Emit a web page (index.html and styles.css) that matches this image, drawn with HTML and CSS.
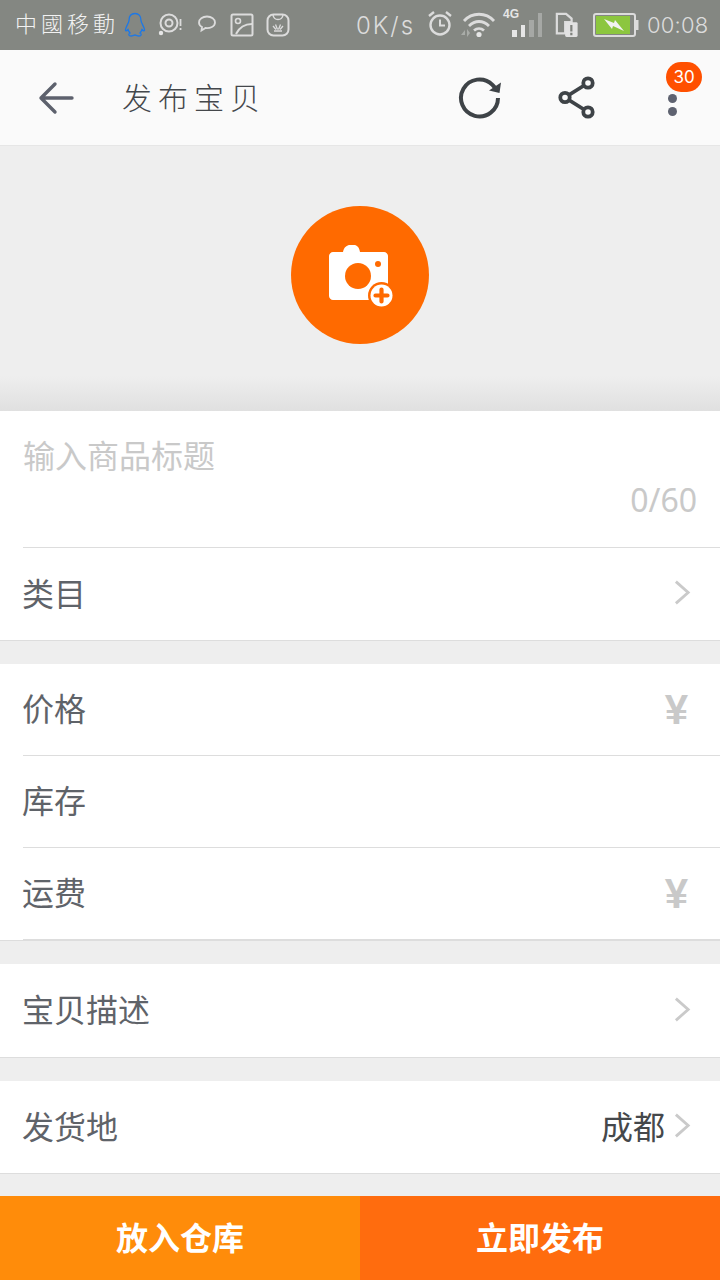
FILE: index.html
```html
<!DOCTYPE html>
<html lang="zh">
<head>
<meta charset="utf-8">
<title>发布宝贝</title>
<link rel="stylesheet" href="styles.css">
</head>
<body>
<div class="page">
  <div class="status">
    <span class="carrier">中國移動</span>
    <svg class="si qq" width="24" height="26" viewBox="0 0 24 26"><path d="M12 1.500c-4 0-6 3-6 7 0 2-3 6-3.500 9-.2 1.500.8 2 2.500 0 .5 1.500 1 2.500 2 3.500-2 1-1.500 3 1 3 2 0 3-1 4-1s2 1 4 1c2.500 0 3-2 1-3 1-1 1.500-2 2-3.500 1.700 2 2.700 1.500 2.500 0-.5-3-3.500-7-3.500-9 0-4-2-7-6-7z" fill="none" stroke="#1d78e6" stroke-width="1.300"/></svg>
    <svg class="si s1" width="26" height="26" viewBox="0 0 26 26"><circle cx="11" cy="11" r="8.500" fill="none" stroke="#dcdcdc" stroke-width="2"/><circle cx="11" cy="11" r="3.500" fill="none" stroke="#dcdcdc" stroke-width="2"/><circle cx="3" cy="21" r="2.200" fill="#e6e6e6"/><path d="M22.500 7v7M22.500 16v2" stroke="#dcdcdc" stroke-width="1.800"/></svg>
    <svg class="si s2" width="22" height="22" viewBox="0 0 22 22"><path d="M11 3.500c-4.500 0-8 2.500-8 6 0 2 1 3.500 3 4.500l-.5 3.500 4-2.500c4.500.5 9.500-1.500 9.500-5.500 0-3.500-3.500-6-8-6z" fill="none" stroke="#dcdcdc" stroke-width="1.800"/></svg>
    <svg class="si s3" width="24" height="24" viewBox="0 0 24 24"><rect x="1.500" y="1.500" width="21" height="21" rx="1.500" fill="none" stroke="#dcdcdc" stroke-width="2"/><circle cx="8" cy="8" r="2.500" fill="none" stroke="#dcdcdc" stroke-width="1.600"/><path d="M6 21c3-6 8-10 16-10" fill="none" stroke="#dcdcdc" stroke-width="2"/></svg>
    <svg class="si s4" width="24" height="24" viewBox="0 0 24 24"><rect x="1.500" y="1.500" width="21" height="21" rx="6" fill="none" stroke="#dcdcdc" stroke-width="2"/><path d="M7 2c.5 3 2.500 4.500 5 4.500S16.500 5 17 2" fill="none" stroke="#dcdcdc" stroke-width="1.500"/><path d="M7 13l3 3.500M9.500 11.500l2 5M14.500 11.500l-2 5M17 13l-3 3.500M8 18h8" stroke="#dcdcdc" stroke-width="1.300"/></svg>
    <span class="speed">0K/s</span>
    <svg class="si s5" width="26" height="28" viewBox="0 0 26 28"><circle cx="13" cy="15" r="9.500" fill="none" stroke="#dcdcdc" stroke-width="2.400"/><path d="M13 9.500V15.500H18" fill="none" stroke="#dcdcdc" stroke-width="2"/><path d="M2 6l5-4M24 6l-5-4" stroke="#dcdcdc" stroke-width="2.400"/></svg>
    <svg class="si s6" width="36" height="28" viewBox="0 0 36 28"><path d="M3 11C11 2 25 2 33 11M8 16c6-6 14-6 20 0M13 20.500c3-2.500 7-2.500 10 0" fill="none" stroke="#dcdcdc" stroke-width="2.800"/><circle cx="18" cy="24.500" r="2.600" fill="#e6e6e6"/><path d="M0 25l4-5v5zM6 19v8l3-4z" fill="#a9aca8"/></svg>
    <span class="net">
      <span class="g4">4G</span>
      <span class="bars"><i class="b1"></i><i class="b2"></i><i class="b3 dim"></i><i class="b4 dim"></i></span>
    </span>
    <svg class="si s7" width="24" height="26" viewBox="0 0 26 28"><path d="M2 2h10l6 5v4h-7v12H2z" fill="none" stroke="#dcdcdc" stroke-width="2.400"/><rect x="11" y="11" width="13.500" height="16" rx="1.500" fill="#e2e2e2"/><path d="M17.700 14v7M17.700 22.500v2.500" stroke="#7f827d" stroke-width="2.400"/></svg>
    <svg class="si s8" width="46" height="24" viewBox="0 0 46 24"><rect x="1" y="1" width="41" height="22" rx="2" fill="none" stroke="#dcdcdc" stroke-width="2"/><rect x="3" y="3" width="34" height="18" fill="#8cc63f"/><rect x="42.500" y="7" width="3" height="10" fill="#dcdcdc"/><path d="M11 6l10 4 1-3 9 11-11-5-1 3z" fill="#f2f2f2"/></svg>
    <span class="clock">00:08</span>
  </div>

  <header class="toolbar">
    <svg class="back" width="36" height="34" viewBox="0 0 36 34"><path d="M17 3L3 17l14 14M3 17h31" fill="none" stroke="#5d616d" stroke-width="3.400" stroke-linecap="round" stroke-linejoin="round"/></svg>
    <h1 class="title">发布宝贝</h1>
    <svg class="refresh" width="46" height="44" viewBox="0 0 46 44"><path d="M40 22a18.500 18.500 0 1 1-5.500-13.200l4 4.500" fill="none" stroke="#3e4347" stroke-width="4"/><path d="M43 6.500L41.500 17 31 14.500z" fill="#3e4347"/></svg>
    <svg class="share" width="42" height="46" viewBox="0 0 42 46"><path d="M32 8L9 22.500 32 37" fill="none" stroke="#3e4347" stroke-width="3.800"/><circle cx="32" cy="8" r="4.700" fill="#fafafa" stroke="#3e4347" stroke-width="3.800"/><circle cx="9" cy="22.500" r="4.700" fill="#fafafa" stroke="#3e4347" stroke-width="3.800"/><circle cx="32" cy="37" r="4.700" fill="#fafafa" stroke="#3e4347" stroke-width="3.800"/></svg>
    <div class="more"><i></i><i></i><span class="badge">30</span></div>
  </header>

  <section class="hero">
    <div class="cam">
      <svg width="66" height="64" viewBox="0 0 66 64"><path d="M4 7H14C15 2 18 0 21 0h4c3 0 5 2 6 7H55c2 0 4 2 4 4V51c0 2-2 4-4 4H4c-2 0-4-2-4-4V11c0-2 2-4 4-4z" fill="#fff"/><circle cx="29" cy="31" r="13" fill="#ff6a00"/><circle cx="49" cy="19" r="3" fill="#ff6a00"/><circle cx="52.500" cy="50.500" r="13.500" fill="#ff6a00"/><circle cx="52.500" cy="50.500" r="11" fill="#fff"/><path d="M52.500 44.500v12M46.500 50.500h12" stroke="#ff6a00" stroke-width="4.200" stroke-linecap="round"/></svg>
    </div>
  </section>

  <section class="group">
    <div class="title-input">
      <div class="placeholder">输入商品标题</div>
      <div class="count">0/60</div>
    </div>
    <div class="row last tall">
      <span class="label">类目</span>
      <svg class="chev" width="17" height="25" viewBox="0 0 18 26"><path d="M2 1.500L15 13 2 24.500" fill="none" stroke="#cacaca" stroke-width="3"/></svg>
    </div>
  </section>

  <section class="group">
    <div class="row"><span class="label">价格</span><span class="yen">¥</span></div>
    <div class="row"><span class="label">库存</span></div>
    <div class="row"><span class="label">运费</span><span class="yen">¥</span></div>
  </section>

  <section class="group">
    <div class="row last tall">
      <span class="label">宝贝描述</span>
      <svg class="chev" width="17" height="25" viewBox="0 0 18 26"><path d="M2 1.500L15 13 2 24.500" fill="none" stroke="#cacaca" stroke-width="3"/></svg>
    </div>
  </section>

  <section class="group final">
    <div class="row last">
      <span class="label">发货地</span>
      <span class="value">成都</span>
      <svg class="chev near" width="17" height="25" viewBox="0 0 18 26"><path d="M2 1.500L15 13 2 24.500" fill="none" stroke="#cacaca" stroke-width="3"/></svg>
    </div>
  </section>

  <footer class="actions">
    <button class="btn store">放入仓库</button>
    <button class="btn publish">立即发布</button>
  </footer>
</div>
</body>
</html>
```

FILE: styles.css
```css
* { box-sizing: border-box; }
html, body { margin: 0; padding: 0; }
body {
  width: 720px;
  height: 1280px;
  overflow: hidden;
  background: #eeeeee;
  font-family: "Noto Sans CJK SC", "Noto Sans", sans-serif;
}
.page { width: 720px; height: 1280px; display: flex; flex-direction: column; background: #eeeeee; }

.status {
  height: 50px;
  background: #848782;
  display: flex;
  align-items: center;
  color: #e6e6e6;
  flex: none;
}
.si { flex: none; display: block; }
.carrier { margin-left: 15px; margin-bottom: 6px; width: 108px; font-size: 22px; letter-spacing: 4px; color: #f2f2f2; white-space: nowrap; font-weight: 300; }
.qq { margin-left: 0; }
.s1 { margin-left: 11px; }
.s2 { margin-left: 12px; margin-top: -2px; }
.s3 { margin-left: 12px; }
.s4 { margin-left: 12px; }
.speed { margin-left: 66px; width: 67px; font-family: "Inter", sans-serif; font-size: 24px; font-weight: 300; letter-spacing: 2px; color: #dcdcdc; white-space: nowrap; }
.s5 { margin-left: 4px; margin-top: -2px; }
.s6 { margin-left: 8px; margin-top: -3px; }
.net { position: relative; width: 38px; height: 38px; margin-left: 6px; flex: none; }
.g4 { position: absolute; left: 0; top: 1px; font: 700 12px/14px "Liberation Sans", sans-serif; color: #e6e6e6; }
.bars { position: absolute; left: 9px; top: 7px; height: 24px; display: flex; align-items: flex-end; gap: 4px; }
.bars i { display: block; width: 4.500px; background: #e6e6e6; }
.bars .dim { background: #a6a8a5; }
.b1 { height: 7px; }
.b2 { height: 12px; }
.b3 { height: 17px; }
.b4 { height: 24px; }
.s7 { margin-left: 14px; }
.s8 { margin-left: 14px; }
.clock { margin-left: 8px; font-family: "Inter", sans-serif; font-size: 22px; font-weight: 300; color: #dcdcdc; letter-spacing: .2px; white-space: nowrap; }

.toolbar {
  height: 96px;
  flex: none;
  background: #fafafa;
  border-bottom: 1px solid #e6e6e6;
  display: flex;
  align-items: center;
}
.back { margin-left: 38px; }
.title { margin: 0 0 4px 48px; width: 170px; font-size: 30px; font-weight: 300; letter-spacing: 6px; color: #44474b; white-space: nowrap; }
.refresh { margin-left: 166px; }
.share { margin-left: 52px; }
.more { position: relative; width: 44px; height: 44px; margin-left: 52px; display: flex; flex-direction: column; align-items: center; justify-content: flex-end; gap: 4px; padding-bottom: 4px; }
.more i { display: block; width: 9px; height: 9px; border-radius: 50%; background: #5e6270; }
.badge { position: absolute; left: 16px; top: -14px; width: 36px; height: 30px; border-radius: 15px; background: #ff5000; color: #fff; font: 400 17px/30px "Inter", sans-serif; text-align: center; }

.hero {
  height: 265px;
  flex: none;
  display: flex;
  justify-content: center;
  padding-top: 60px;
  background: linear-gradient(#eeeeee 230px, #e0e0e0 265px);
}
.cam { width: 138px; height: 138px; border-radius: 50%; background: #ff6a00; display: flex; align-items: center; justify-content: center; }
.cam svg { margin-left: 4px; margin-top: 4px; flex: none; }

.group { background: #fff; margin-bottom: 23px; border-bottom: 1px solid #dddddd; flex: none; }
.group.final { margin-bottom: 22px; }
.title-input { height: 136px; padding: 0 23px; }
.placeholder { padding-top: 20px; font-size: 32px; line-height: 46px; color: #c9c9c9; }
.count { padding-top: 2px; text-align: right; font-family: "Noto Sans", sans-serif; font-size: 32px; line-height: 42px; color: #c9c9c9; }
.row { height: 92px; margin-left: 23px; padding-right: 29px; display: flex; align-items: center; justify-content: space-between; border-bottom: 1px solid #dddddd; }
.group > .title-input + .row { border-top: 1px solid #dddddd; }
.row.last { border-bottom: 0; }
.row.tall { height: 93px; }
.label { margin-left: -1px; padding-bottom: 5px; font-size: 32px; color: #5f6369; }
.value { padding-bottom: 5px; margin-left: auto; margin-right: 1px; font-size: 32px; color: #45484b; }
.chev { flex: none; margin-bottom: 3px; }
.chev.near { margin-left: 8px; }
.yen { font: 700 42px/1 "Liberation Sans", sans-serif; color: #c9c9c9; margin-right: 3px; }

.actions { margin-top: auto; height: 84px; display: flex; flex: none; }
.btn { flex: 1; border: 0; padding: 0 0 4px; color: #fff; font: 700 32px "Noto Sans CJK SC", sans-serif; }
.store { background: #ff8c0a; }
.publish { background: #ff6c0e; }
```
